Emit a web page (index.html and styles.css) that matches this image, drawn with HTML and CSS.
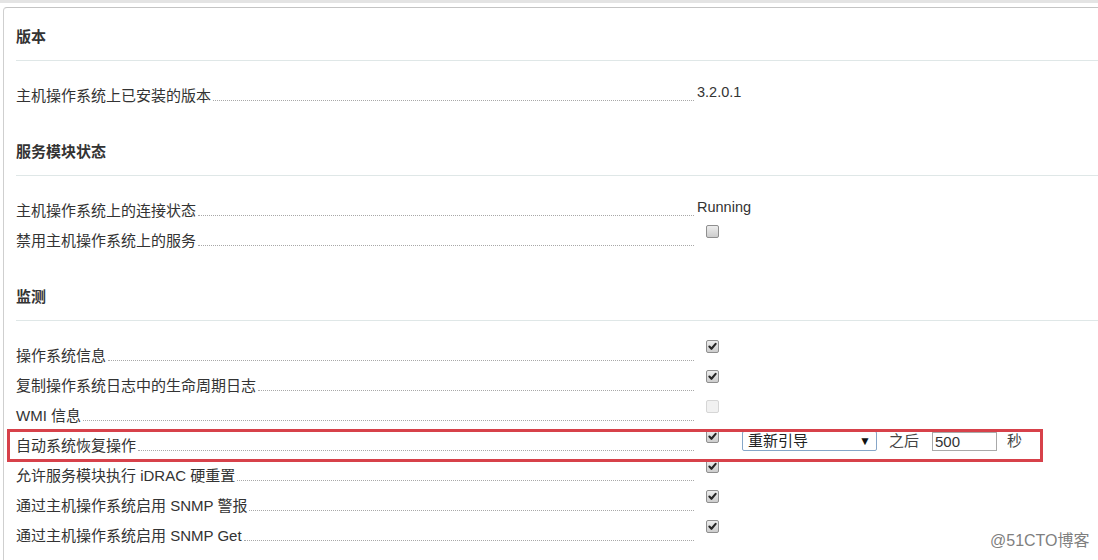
FILE: index.html
```html
<!DOCTYPE html>
<html lang="zh-CN">
<head>
<meta charset="utf-8">
<title>iDRAC 服务模块</title>
<link rel="stylesheet" href="styles.css">
</head>
<body>
<div class="topstrip"></div>
<div class="panel">
  <section class="section first">
    <h3 class="heading">版本</h3>
    <div class="rows">
      <div class="row">
        <div class="label"><span class="text">主机操作系统上已安装的版本</span><span class="leader"></span></div>
        <div class="value"><span class="val">3.2.0.1</span></div>
      </div>
    </div>
  </section>

  <section class="section">
    <h3 class="heading">服务模块状态</h3>
    <div class="rows">
      <div class="row">
        <div class="label"><span class="text">主机操作系统上的连接状态</span><span class="leader"></span></div>
        <div class="value"><span class="val">Running</span></div>
      </div>
      <div class="row">
        <div class="label"><span class="text">禁用主机操作系统上的服务</span><span class="leader"></span></div>
        <div class="value"><span class="cb"></span></div>
      </div>
    </div>
  </section>

  <section class="section">
    <h3 class="heading">监测</h3>
    <div class="rows">
      <div class="row">
        <div class="label"><span class="text">操作系统信息</span><span class="leader"></span></div>
        <div class="value"><span class="cb checked"><svg viewBox="0 0 13 13"><path d="M2.8 6.6 L5.3 9.2 L10.2 3.4"/></svg></span></div>
      </div>
      <div class="row">
        <div class="label"><span class="text">复制操作系统日志中的生命周期日志</span><span class="leader"></span></div>
        <div class="value"><span class="cb checked"><svg viewBox="0 0 13 13"><path d="M2.8 6.6 L5.3 9.2 L10.2 3.4"/></svg></span></div>
      </div>
      <div class="row">
        <div class="label"><span class="text">WMI 信息</span><span class="leader"></span></div>
        <div class="value"><span class="cb disabled"></span></div>
      </div>
      <div class="row">
        <div class="label"><span class="text">自动系统恢复操作</span><span class="leader"></span></div>
        <div class="value">
          <span class="cb checked"><svg viewBox="0 0 13 13"><path d="M2.8 6.6 L5.3 9.2 L10.2 3.4"/></svg></span>
          <div class="select"><span class="sel-text">重新引导</span><span class="sel-arrow">▼</span></div>
          <span class="after">之后</span>
          <input class="num" type="text" value="500">
          <span class="unit">秒</span>
        </div>
      </div>
      <div class="row">
        <div class="label"><span class="text">允许服务模块执行 iDRAC 硬重置</span><span class="leader"></span></div>
        <div class="value"><span class="cb checked"><svg viewBox="0 0 13 13"><path d="M2.8 6.6 L5.3 9.2 L10.2 3.4"/></svg></span></div>
      </div>
      <div class="row">
        <div class="label"><span class="text">通过主机操作系统启用 SNMP 警报</span><span class="leader"></span></div>
        <div class="value"><span class="cb checked"><svg viewBox="0 0 13 13"><path d="M2.8 6.6 L5.3 9.2 L10.2 3.4"/></svg></span></div>
      </div>
      <div class="row">
        <div class="label"><span class="text">通过主机操作系统启用 SNMP Get</span><span class="leader"></span></div>
        <div class="value"><span class="cb checked"><svg viewBox="0 0 13 13"><path d="M2.8 6.6 L5.3 9.2 L10.2 3.4"/></svg></span></div>
      </div>
    </div>
  </section>
</div>
<div class="highlight"></div>
<div class="watermark">@51CTO博客</div>
</body>
</html>
```

FILE: styles.css
```css
html, body {
  margin: 0;
  padding: 0;
  background: #ffffff;
  overflow: hidden;
  width: 1098px;
  height: 560px;
}
body {
  position: relative;
  font-family: "Liberation Sans", "Noto Sans CJK SC", sans-serif;
  font-size: 15px;
  line-height: 20px;
  color: #333333;
}
.topstrip {
  height: 3px;
  background: #e4e4e4;
}
.panel {
  margin: 4px 0 0 3px;
  width: 1095px;
  height: 553px;
  overflow: hidden;
  border-top: 1px solid #c4c4c4;
  border-left: 1px solid #cfcfcf;
  border-top-left-radius: 4px;
  padding: 19px 0 0 12px;
  box-sizing: border-box;
}
.section {
  margin-top: 32px;
}
.section.first {
  margin-top: 0;
}
.heading {
  margin: 0;
  font-size: 15px;
  line-height: 20px;
  font-weight: bold;
  color: #333333;
  padding-bottom: 13px;
  border-bottom: 1px solid #dfe7e7;
}
.rows {
  padding-top: 19px;
}
.row {
  display: flex;
  height: 30px;
}
.label {
  width: 678px;
  display: flex;
  padding-top: 6px;
  height: 20px;
}
.text {
  white-space: nowrap;
}
.leader {
  flex: 1;
  align-self: flex-end;
  height: 0;
  border-bottom: 1px dotted #a8a8a8;
  margin: 0 0 5px 2px;
}
.value {
  margin-left: 3px;
  display: flex;
  align-items: flex-start;
}
.val {
  font-size: 14.5px;
  padding-top: 2px;
  color: #333333;
}
.cb {
  display: block;
  width: 13px;
  height: 13px;
  margin-left: 9px;
  box-sizing: border-box;
  border: 1px solid #8f8f8f;
  border-radius: 2px;
  background: linear-gradient(#ededed, #cdcdcd);
}
.cb svg {
  display: block;
  width: 11px;
  height: 11px;
}
.cb svg path {
  fill: none;
  stroke: #262626;
  stroke-width: 2.5;
  stroke-linecap: round;
  stroke-linejoin: round;
}
.cb.disabled {
  border-color: #d6d6d6;
  background: #f1f1f1;
}
.select {
  margin: 1px 0 0 23px;
  width: 135px;
  height: 20px;
  box-sizing: border-box;
  border: 1px solid #86a6c8;
  border-radius: 2px;
  display: flex;
  align-items: center;
  justify-content: space-between;
  padding: 0 5px 0 5px;
  background: #ffffff;
}
.sel-text {
  font-size: 15px;
  line-height: 18px;
  color: #222222;
}
.sel-arrow {
  font-size: 12px;
  line-height: 18px;
  color: #111111;
}
.after {
  margin: 1px 0 0 12px;
  color: #444444;
}
.num {
  margin: 2px 0 0 13px;
  width: 65px;
  height: 19px;
  box-sizing: border-box;
  border: 1px solid #a9a9a9;
  padding: 0 2px;
  font-family: "Liberation Sans", "Noto Sans CJK SC", sans-serif;
  font-size: 15px;
  line-height: 17px;
  color: #333333;
  outline: none;
}
.unit {
  margin: 1px 0 0 10px;
  color: #444444;
}
.highlight {
  position: absolute;
  left: 7px;
  top: 429px;
  width: 1036px;
  height: 33px;
  box-sizing: border-box;
  border: 3px solid #d7414a;
}
.watermark {
  position: absolute;
  left: 990px;
  top: 531px;
  font-size: 16px;
  line-height: 20px;
  color: #7f7f7f;
  text-shadow: 0 0 2px #ffffff;
}
```
